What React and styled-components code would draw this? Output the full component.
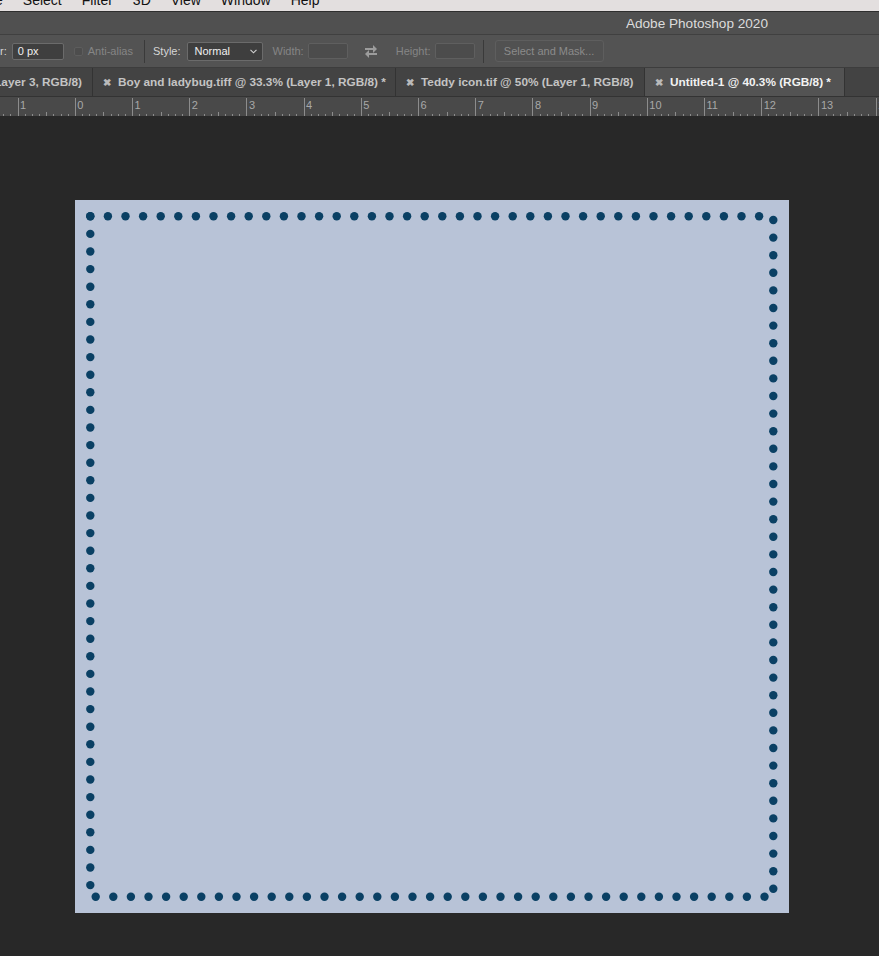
import React from 'react'
import styled, {createGlobalStyle} from 'styled-components'

const GlobalStyle = createGlobalStyle`
  html, body {
    margin: 0;
    padding: 0;
    background: #282828;
  }
  body {
    font-family: "Liberation Sans", Arial, sans-serif;
  }
`

const Page = styled.div`
  display: flex;
  flex-direction: column;
  width: 879px;
  height: 956px;
  overflow: hidden;
  background: #282828;
`

const MenuBar = styled.div`
  display: flex;
  gap: 20px;
  height: 11px;
  margin-left: -5px;
  overflow: hidden;
  background: #e3dfdf;
  border-bottom: 1px solid #2e2e2e;
`

const MenuItem = styled.span`
  display: block;
  margin-top: -8px;
  font-size: 14px;
  line-height: 16px;
  color: #111;
  white-space: nowrap;
`

const TitleBar = styled.div`
  display: flex;
  justify-content: flex-end;
  align-items: center;
  height: 22px;
  padding-right: 111px;
  background: #505050;
  border-bottom: 1px solid #404040;
  font-size: 13.6px;
  color: #dcdcdc;
`

const OptionsBar = styled.div`
  display: flex;
  align-items: center;
  height: 32px;
  background: #535353;
  border-bottom: 1px solid #3d3d3d;
  font-size: 11px;
  white-space: nowrap;
`

const Label = styled.span`
  color: ${p => (p.disabled ? '#858585' : '#d6d6d6')};
  margin-left: ${p => p.ml || 0}px;
`

const Field = styled.div`
  box-sizing: border-box;
  display: flex;
  align-items: center;
  width: ${p => p.w}px;
  height: ${p => p.h || 17}px;
  margin-left: ${p => p.ml || 0}px;
  padding-left: 5px;
  background: ${p => (p.disabled ? '#4c4c4c' : '#3f3f3f')};
  border: 1px solid ${p => (p.disabled ? '#5f5f5f' : '#6b6b6b')};
  border-radius: 2px;
  color: #f0f0f0;
`

const Select = styled(Field)`
  justify-content: space-between;
  padding: 0 5px 0 7px;
  background: #3e3e3e;
`

const Check = styled.span`
  box-sizing: border-box;
  width: 9px;
  height: 9px;
  margin-left: 10px;
  border: 1px solid #5d5d5d;
  border-radius: 2px;
  background: #4d4d4d;
`

const Divider = styled.span`
  width: 1px;
  height: 23px;
  margin-left: ${p => p.ml || 0}px;
  background: #3a3a3a;
`

const MaskButton = styled.div`
  box-sizing: border-box;
  display: flex;
  align-items: center;
  justify-content: center;
  width: 109px;
  height: 22px;
  margin-left: 11px;
  border: 1px solid #5e5e5e;
  border-radius: 3px;
  background: #515151;
  color: #8b8b8b;
`

const IconSlot = styled.span`
  display: flex;
  margin-left: ${p => p.ml || 0}px;
`

const TabBar = styled.div`
  display: flex;
  height: 28px;
  background: #434343;
  border-bottom: 1px solid #333;
`

const Tab = styled.div`
  box-sizing: border-box;
  flex: none;
  display: flex;
  align-items: center;
  justify-content: ${p => (p.clip ? 'flex-end' : 'flex-start')};
  gap: 7px;
  width: ${p => p.w}px;
  padding: 0 10px 0 ${p => (p.clip ? 0 : 10)}px;
  overflow: hidden;
  white-space: nowrap;
  background: ${p => (p.active ? '#535353' : '#434343')};
  border-right: 1px solid #333;
  font-size: 11.8px;
  font-weight: bold;
  color: ${p => (p.active ? '#f2f2f2' : '#c4c4c4')};
`

const Close = styled.span`
  font-size: 10px;
  color: #bababa;
`

const RulerWrap = styled.div`
  height: 19px;
  background: #494949;
`

const Workspace = styled.div`
  flex: 1;
  padding: 84px 0 0 75px;
  background: #282828;
`

const Document = styled.div`
  width: 714px;
  height: 713px;
  background: #b8c3d7;
`

const DOT = '#0a4064'
const STEP = 17.6
const COUNT = 39

const range = (n) => Array.from({length: n}, (_, i) => i)

const Ruler = () => {
  const inch = 57.2
  const origin = 75.3
  const ticks = []
  for (let k = -2; k <= 14; k++) {
    const x0 = origin + k * inch
    ticks.push(<line key={'M' + k} x1={x0} x2={x0} y1={1} y2={19} stroke="#8c8c8c" strokeWidth="1" />)
    if (k >= -1) {
      ticks.push(
        <text key={'T' + k} x={x0 + 2} y={12} fontSize="11" fill="#a8a8a8" fontFamily="Liberation Sans, Arial, sans-serif">
          {Math.abs(k)}
        </text>
      )
    }
    for (let s = 1; s < 8; s++) {
      const x = x0 + (s * inch) / 8
      const h = s === 4 ? 4 : 2
      ticks.push(<line key={k + '-' + s} x1={x} x2={x} y1={19 - h} y2={19} stroke="#8c8c8c" strokeWidth="1" />)
    }
  }
  return (
    <RulerWrap>
      <svg width="879" height="19" shapeRendering="crispEdges">
        {ticks}
      </svg>
    </RulerWrap>
  )
}

const DottedBorder = () => (
  <svg width="714" height="713">
    {range(COUNT).map(i => (
      <circle key={'t' + i} cx={15.3 + i * STEP} cy={16.3} r="4.2" fill={DOT} />
    ))}
    {range(COUNT).map(i => (
      <circle key={'l' + i} cx={15.3} cy={16.3 + i * STEP} r="4.2" fill={DOT} />
    ))}
    {range(COUNT).map(i => (
      <circle key={'b' + i} cx={20.7 + i * STEP} cy={696.7} r="4.2" fill={DOT} />
    ))}
    {range(COUNT).map(i => (
      <circle key={'r' + i} cx={698.3} cy={20 + i * STEP} r="4.2" fill={DOT} />
    ))}
  </svg>
)

const SwapIcon = () => (
  <svg width="14" height="13" viewBox="0 0 14 13" fill="#9c9c9c">
    <rect x="1" y="3" width="9" height="2" />
    <polygon points="9,0 13,4 9,8" />
    <rect x="4" y="8" width="9" height="2" />
    <polygon points="5,5 1,9 5,13" />
  </svg>
)

const Chevron = () => (
  <svg width="7" height="5" viewBox="0 0 7 5">
    <polyline points="0.5,0.8 3.5,3.8 6.5,0.8" fill="none" stroke="#d0d0d0" strokeWidth="1.1" />
  </svg>
)

const menus = ['e', 'Select', 'Filter', '3D', 'View', 'Window', 'Help']

const App = () => (
  <Page>
    <GlobalStyle />
    <MenuBar>
      {menus.map(m => (
        <MenuItem key={m}>{m}</MenuItem>
      ))}
    </MenuBar>
    <TitleBar>Adobe Photoshop 2020</TitleBar>
    <OptionsBar>
      <Label>r:</Label>
      <Field w={52} ml={5}>0 px</Field>
      <Check />
      <Label disabled ml={5}>Anti-alias</Label>
      <Divider ml={11} />
      <Label ml={8}>Style:</Label>
      <Select w={76} h={19} ml={6}>
        Normal
        <Chevron />
      </Select>
      <Label disabled ml={10}>Width:</Label>
      <Field disabled w={40} h={16} ml={4} />
      <IconSlot ml={16}>
        <SwapIcon />
      </IconSlot>
      <Label disabled ml={18}>Height:</Label>
      <Field disabled w={40} h={16} ml={4} />
      <Divider ml={8} />
      <MaskButton>Select and Mask...</MaskButton>
    </OptionsBar>
    <TabBar>
      <Tab clip w={93}>
        <span>Boy.psd @ 50% (Layer 3, RGB/8)</span>
      </Tab>
      <Tab w={303}>
        <Close>✖</Close>
        <span>Boy and ladybug.tiff @ 33.3% (Layer 1, RGB/8) *</span>
      </Tab>
      <Tab w={249}>
        <Close>✖</Close>
        <span>Teddy icon.tif @ 50% (Layer 1, RGB/8)</span>
      </Tab>
      <Tab active w={200}>
        <Close>✖</Close>
        <span>Untitled-1 @ 40.3% (RGB/8) *</span>
      </Tab>
    </TabBar>
    <Ruler />
    <Workspace>
      <Document>
        <DottedBorder />
      </Document>
    </Workspace>
  </Page>
)

export default App
